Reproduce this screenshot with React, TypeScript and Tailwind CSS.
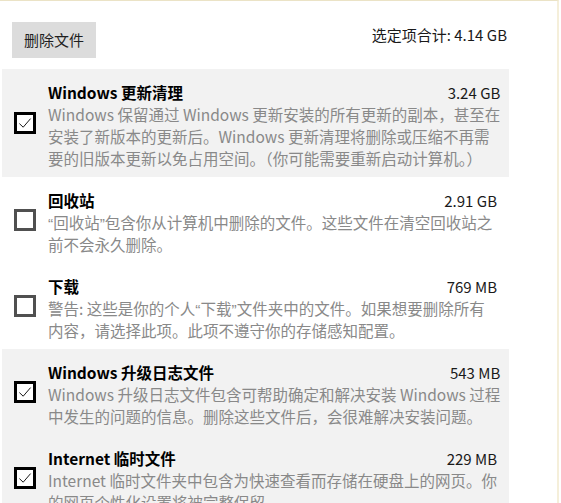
import React from "react";

type Item = {
    title: string;
    size: string;
    lines: React.ReactNode[];
    checked: boolean;
};

// narrow quote marks, as the reference renders them
const Q = ({ c }: { c: string }) => (
    <span className="font-['Liberation_Sans',sans-serif] leading-none">{c}</span>
);

const items: Item[] = [
    {
        title: "Windows 更新清理",
        size: "3.24 GB",
        checked: true,
        lines: [
            "Windows 保留通过 Windows 更新安装的所有更新的副本，甚至在",
            "安装了新版本的更新后。Windows 更新清理将删除或压缩不再需",
            "要的旧版本更新以免占用空间。（你可能需要重新启动计算机。）",
        ],
    },
    {
        title: "回收站",
        size: "2.91 GB",
        checked: false,
        lines: [
            <>
                <Q c="“" />回收站<Q c="”" />包含你从计算机中删除的文件。这些文件在清空回收站之
            </>,
            "前不会永久删除。",
        ],
    },
    {
        title: "下载",
        size: "769 MB",
        checked: false,
        lines: [
            <>
                警告: 这些是你的个人<Q c="“" />下载<Q c="”" />文件夹中的文件。如果想要删除所有
            </>,
            "内容，请选择此项。此项不遵守你的存储感知配置。",
        ],
    },
    {
        title: "Windows 升级日志文件",
        size: "543 MB",
        checked: true,
        lines: [
            "Windows 升级日志文件包含可帮助确定和解决安装 Windows 过程",
            "中发生的问题的信息。删除这些文件后，会很难解决安装问题。",
        ],
    },
    {
        title: "Internet 临时文件",
        size: "229 MB",
        checked: true,
        lines: [
            "Internet 临时文件夹中包含为快速查看而存储在硬盘上的网页。你",
            "的网页个性化设置将被完整保留。",
        ],
    },
];

function CheckBox({ checked }: { checked: boolean }) {
    return (
        <div
            className={
                checked
                    ? "w-[22px] h-[22px] shrink-0 bg-white border-[3px] border-black"
                    : "w-[22px] h-[22px] shrink-0 bg-white border-[3px] border-[#505050]"
            }
        >
            {checked && (
                <svg viewBox="0 0 16 16" className="w-full h-full">
                    <path d="M2.4 8.6 L6.2 12.2 L13.6 3.6" fill="none" stroke="#000" strokeWidth="0.9" />
                </svg>
            )}
        </div>
    );
}

export default function App() {
    return (
        <div className="w-[559px] h-[503px] overflow-hidden bg-white border-t border-r-2 border-t-[#ebe3c6] border-r-[#f5efda] font-['Noto_Sans_CJK_SC',sans-serif]">
            {/* header */}
            <div className="flex items-start justify-between pl-[12px] pr-[50px] pt-[21px]">
                <button className="w-[84px] h-[36px] bg-[#dcdcdc] text-[15px] text-[#1f1f1f]">删除文件</button>
                <span className="mt-[2px] text-[15px] leading-[22px] text-[#1a1a1a]">选定项合计: 4.14 GB</span>
            </div>

            {/* list */}
            <div className="mt-[11px] ml-[2px] w-[507px]">
                {items.map((item) => (
                    <div
                        key={item.title}
                        className={
                            item.checked
                                ? "flex items-center gap-[12px] pl-[12px] pr-[12px] bg-[#f2f2f2]"
                                : "flex items-center gap-[12px] pl-[12px] pr-[12px] bg-white"
                        }
                    >
                        <CheckBox checked={item.checked} />
                        <div className="flex-1 pt-[14px] pb-[8px]">
                            <div className="flex justify-between items-center h-[20px]">
                                <span className="text-[15.5px] font-bold text-black">{item.title}</span>
                                <span className="text-[15px] text-[#1a1a1a]">{item.size}</span>
                            </div>
                            {item.lines.map((line, i) => (
                                <div key={i} className="h-[22px] text-[15.5px] leading-[22px] text-[#898989] whitespace-nowrap">
                                    {line}
                                </div>
                            ))}
                        </div>
                    </div>
                ))}
            </div>
        </div>
    );
}
